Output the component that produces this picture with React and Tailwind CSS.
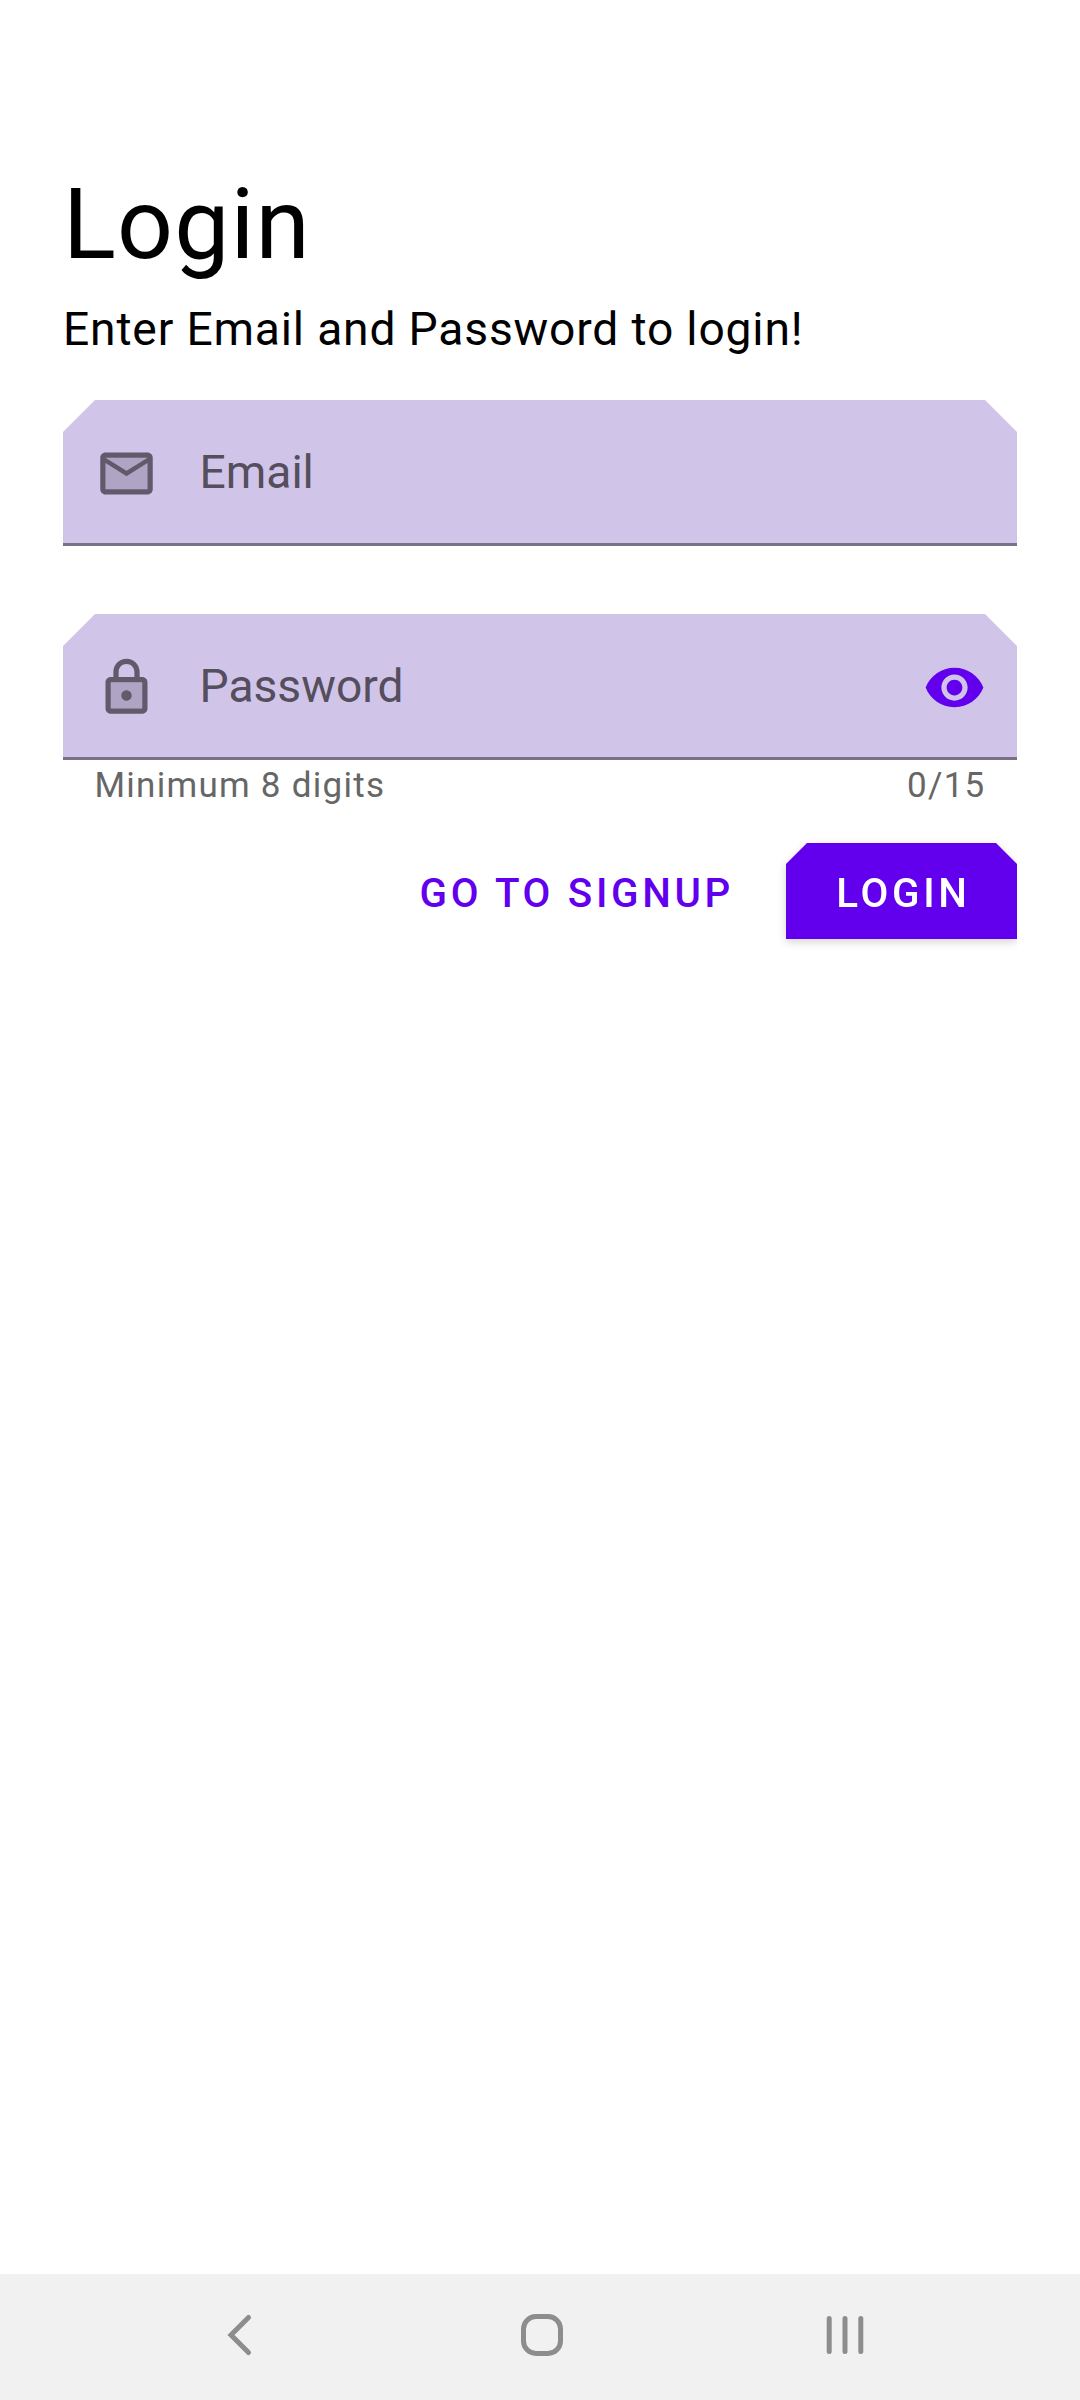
function MailIcon() {
  return (
    <svg viewBox="0 0 24 24" className="size-[63px] shrink-0" fill="#000" fillOpacity="0.54">
      <path fillOpacity="0.162" d="M20 8l-8 5-8-5v10h16V8zm0-2H4l8 4.99L20 6z" />
      <path d="M4 20h16c1.1 0 2-.9 2-2V6c0-1.1-.9-2-2-2H4c-1.1 0-2 .9-2 2v12c0 1.1.9 2 2 2zM20 6l-8 4.99L4 6h16zM4 8l8 5 8-5v10H4V8z" />
    </svg>
  );
}

function LockIcon() {
  return (
    <svg viewBox="0 0 24 24" className="size-[63px] shrink-0" fill="#000" fillOpacity="0.54">
      <path fillOpacity="0.162" d="M6 20h12V10H6v10zm6-7c1.1 0 2 .9 2 2s-.9 2-2 2-2-.9-2-2 .9-2 2-2z" />
      <path d="M18 8h-1V6c0-2.76-2.24-5-5-5S7 3.24 7 6v2H6c-1.1 0-2 .9-2 2v10c0 1.1.9 2 2 2h12c1.1 0 2-.9 2-2V10c0-1.1-.9-2-2-2zM9 6c0-1.66 1.34-3 3-3s3 1.34 3 3v2H9V6zm9 14H6V10h12v10zm-6-3c1.1 0 2-.9 2-2s-.9-2-2-2-2 .9-2 2 .9 2 2 2z" />
    </svg>
  );
}

function EyeIcon() {
  return (
    <svg viewBox="0 0 24 24" className="size-[63px] shrink-0" fill="#6200ee">
      <path d="M12 4.5C7 4.5 2.73 7.61 1 12c1.73 4.39 6 7.5 11 7.5s9.27-3.11 11-7.5c-1.73-4.39-6-7.5-11-7.5zM12 17c-2.76 0-5-2.24-5-5s2.24-5 5-5 5 2.24 5 5-2.24 5-5 5zm0-8c-1.66 0-3 1.34-3 3s1.34 3 3 3 3-1.34 3-3-1.34-3-3-3z" />
    </svg>
  );
}

function Field({ icon, label, trailing }) {
  return (
    <div className="flex h-[146px] items-center border-b-[3px] border-[#797287] bg-[#d1c4e9] pt-[4px] pr-[31px] pl-[31.5px] [clip-path:polygon(0_32px,32px_0,calc(100%-32px)_0,100%_32px,100%_100%,0_100%)]">
      {icon}
      <span className="mb-1 ml-[42px] flex-1 text-[46.2px] leading-[54px] text-[#544e5d]">
        {label}
      </span>
      {trailing}
    </div>
  );
}

export default function App() {
  return (
    <div className="flex h-[2400px] w-[1080px] flex-col bg-white font-['Roboto',sans-serif] text-black">
      <main className="flex-1 px-[63px] pt-[167px]">
        <h1 className="text-[98.2px] leading-[116px] tracking-[0.0115em]">Login</h1>
        <p className="mt-[19px] text-[46.2px] leading-[54px] tracking-[0.0178em]">
          Enter Email and Password to login!
        </p>
        <div className="mt-11 flex flex-col gap-[68px]">
          <Field icon={<MailIcon />} label="Email" />
          <Field icon={<LockIcon />} label="Password" trailing={<EyeIcon />} />
        </div>
        <div className="mt-[6px] flex justify-between px-[31.5px] text-[35px] leading-10 tracking-[0.036em] text-[#666]">
          <span>Minimum 8 digits</span>
          <span>0/15</span>
        </div>
        <div className="mt-[37px] flex justify-end gap-[52px] text-[40.4px] font-medium leading-[91px] tracking-[0.0905em] [clip-path:inset(-20px_0_-40px_0)]">
          <button className="h-24 pt-[5px] text-[#6200ee]">GO TO SIGNUP</button>
          <div className="[filter:drop-shadow(0_3px_4px_rgba(0,0,0,0.17))]">
            <button className="h-24 w-[231px] bg-[#6200ee] pt-[5px] pl-[4px] text-white [clip-path:polygon(0_21px,21px_0,calc(100%-21px)_0,100%_21px,100%_100%,0_100%)]">
              LOGIN
            </button>
          </div>
        </div>
      </main>
      <nav className="flex h-[126px] items-center bg-[#f1f1f1] pb-[4px] pl-[226px]">
        <svg className="h-[46px] w-[28px]" viewBox="0 0 28 46" fill="none" stroke="#8d8d8d" strokeWidth="5" strokeLinecap="round">
          <path d="M22.5 5.5L5 23L22.5 40.5" />
        </svg>
        <div className="ml-[267px] size-[42px] rounded-[15px] border-[5px] border-[#8d8d8d]" />
        <svg className="ml-[261px] h-[42px] w-[42px]" viewBox="0 0 42 42" fill="none" stroke="#8d8d8d" strokeWidth="5" strokeLinecap="round">
          <path d="M5.2 4.5V37.5M21 4.5V37.5M36.8 4.5V37.5" />
        </svg>
      </nav>
    </div>
  );
}
